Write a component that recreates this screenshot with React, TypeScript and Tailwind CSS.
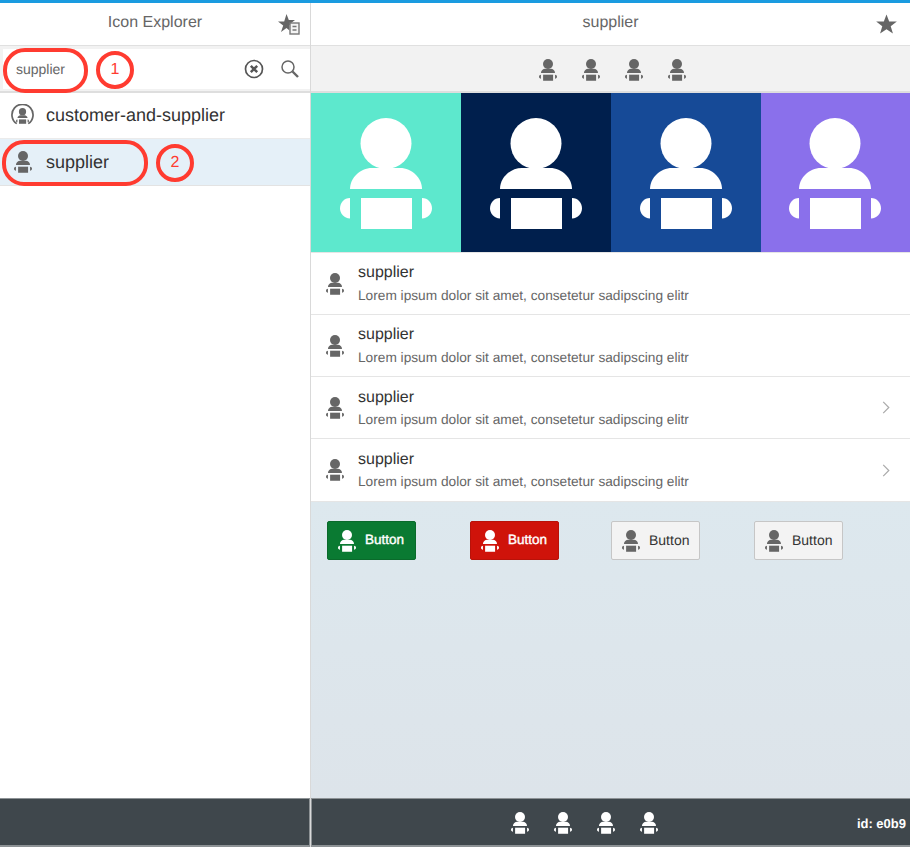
import React from "react";

function Supplier({ className, fill = "#666" }: { className: string; fill?: string }) {
  return (
    <svg viewBox="0 0 92 112" className={className} fill={fill}>
      <circle cx="46" cy="25.5" r="25.5" />
      <path d="M10 71C10 60 20 50 32 50H60C72 50 82 60 82 71Z" />
      <rect x="21" y="80" width="51" height="31" />
      <path d="M10 80V100.500C4 100.500 0 95 0 90.500C0 85 4 80 10 80Z" />
      <path d="M82 80V100.500C88 100.500 92 95 92 90.500C92 85 88 80 82 80Z" />
    </svg>
  );
}

function StarIcon({ className }: { className: string }) {
  return (
    <svg viewBox="0 0 24 24" className={className} fill="#666">
      <path d="M12 1.500L14.800 8.900H22.800L16.400 13.700L18.700 21.500L12 16.900L5.300 21.500L7.600 13.700L1.200 8.900H9.200Z" />
    </svg>
  );
}

function ListRow({ chevron, last }: { chevron?: boolean; last?: boolean }) {
  return (
    <div className={`flex items-center border-b border-[#e5e5e5] bg-white pl-[15px] pr-[20px] ${last ? "h-[63px]" : "h-[62px]"}`}>
      <Supplier className="h-[22px] w-[18px] shrink-0" />
      <div className="ml-[14px] flex-1">
        <div className={`text-[16px] leading-[20px] text-[#333] ${chevron ? "mt-[1px]" : ""}`}>supplier</div>
        <div className={`text-[13.700px] leading-[18px] text-[#666] ${chevron ? "mt-[3px]" : "mt-[4px]"}`}>
          Lorem ipsum dolor sit amet, consetetur sadipscing elitr
        </div>
      </div>
      {chevron && (
        <svg viewBox="0 0 8 14" className="h-[13px] w-[8px]" fill="none" stroke="#aaa" strokeWidth="1.300">
          <path d="M1 1L7 7L1 13" />
        </svg>
      )}
    </div>
  );
}

function Btn({ kind }: { kind: "green" | "red" | "plain" }) {
  const cls =
    kind === "green"
      ? "border-[#0a6a2b] bg-[#0a7a32] text-white text-[13.500px] [-webkit-text-stroke:0.4px_white]"
      : kind === "red"
        ? "border-[#b81209] bg-[#cf130a] text-white text-[13.500px] [-webkit-text-stroke:0.4px_white]"
        : "border-[#c6c6c6] bg-[#f3f3f3] text-[#333] text-[14px]";
  return (
    <div className={`flex h-[39px] w-[89px] items-center rounded-[2px] border pl-[10px] ${cls}`}>
      <Supplier className="h-[22px] w-[18px] shrink-0" fill={kind === "plain" ? "#666" : "#fff"} />
      <span className="ml-[9px]">Button</span>
    </div>
  );
}

export default function App() {
  const tiles = ["bg-[#5de8cd]", "bg-[#001f4d]", "bg-[#164a97] pr-[1px]", "bg-[#8a70eb] pr-[1px]"];
  return (
    <div className="relative flex h-[847px] w-[910px] flex-col overflow-hidden bg-white font-['Liberation_Sans',sans-serif] [text-rendering:geometricPrecision]">
      <div className="h-[3px] bg-[#1a9be0]" />
      <div className="flex flex-1">
        <div className="flex w-[311px] flex-col border-r border-[#d9d9d9]">
          <div className="relative flex h-[43px] items-center justify-center border-b border-[#e0e0e0] pb-[2px] text-[16px] text-[#666]">
            Icon Explorer
            <svg viewBox="0 0 24 24" className="absolute left-[277px] top-[9px] h-[24px] w-[24px]" fill="#666">
              <path d="M9.500 2L11.800 8H18L13.500 11.500V13H12.500V18.500L9.500 16L4 20L6.200 13.500L1 9.500H7.200Z" />
              <rect x="13" y="11" width="9" height="11" fill="#f4f4f4" stroke="#777" strokeWidth="1.400" />
              <path d="M15.500 14.500H19.500M15.500 18H19.500" stroke="#777" strokeWidth="1.400" />
            </svg>
          </div>
          <div className="flex h-[47px] flex-col justify-start border-b-2 border-[#dedede] bg-[#f2f2f2] pl-[3px] pt-[3px]">
            <div className="flex h-[40px] items-center bg-white pl-[13px] pr-[10px]">
              <span className="flex-1 text-[14px] text-[#666]">supplier</span>
              <svg viewBox="0 0 20 20" className="mr-[16px] h-[20px] w-[20px]" fill="none" stroke="#555" strokeWidth="1.700">
                <circle cx="10" cy="10" r="8.500" />
                <path d="M6.800 6.800L13.200 13.200M13.200 6.800L6.800 13.200" strokeWidth="2.400" />
              </svg>
              <svg viewBox="0 0 20 20" className="h-[20px] w-[20px]" fill="none" stroke="#666" strokeWidth="1.500">
                <circle cx="8" cy="8" r="6" />
                <path d="M12.500 12.500L18 18" strokeWidth="2.400" />
              </svg>
            </div>
          </div>
          <div className="flex h-[46px] items-center border-b border-[#ebebeb] pl-[11px] text-[18px] text-[#333]">
            <div className="relative flex h-[23px] w-[23px] items-center justify-center">
              <svg viewBox="0 0 24 24" className="absolute inset-0" fill="none" stroke="#666" strokeWidth="1.800">
                <path d="M6 20.500A11 11 0 1 1 18 20.500" />
              </svg>
              <Supplier className="h-[16px] w-[13px]" />
            </div>
            <span className="ml-[12px]">customer-and-supplier</span>
          </div>
          <div className="flex h-[47px] items-center border-b border-[#e3e3e3] bg-[#e5f0f8] pl-[14px] text-[18px] text-[#333]">
            <Supplier className="h-[22px] w-[18px]" />
            <span className="ml-[14px]">supplier</span>
          </div>
          <div className="flex-1" />
          <div className="h-[49px] border-t border-r border-b-2 border-[#8d9295] bg-[#3f474c]" />
        </div>

        <div className="flex flex-1 flex-col">
          <div className="flex h-[43px] items-center justify-center border-b border-[#e0e0e0] text-[16px] text-[#666]">
            <span className="flex-1 pb-[2px] pl-[35px] text-center">supplier</span>
            <StarIcon className="mr-[12px] h-[23px] w-[23px]" />
          </div>
          <div className="flex h-[47px] items-center justify-center gap-[25px] border-b-2 border-[#dedede] bg-[#f2f2f2] pl-[4px] pt-[2px]">
            {[0, 1, 2, 3].map((i) => (
              <Supplier key={i} className="h-[22px] w-[18px]" />
            ))}
          </div>
          <div className="grid h-[159px] grid-cols-[150px_150px_150px_149px]">
            {tiles.map((t) => (
              <div key={t} className={`flex items-center justify-center pt-[2px] ${t}`}>
                <Supplier className="h-[112px] w-[92px]" fill="#fff" />
              </div>
            ))}
          </div>
          <div className="border-t border-[#e5e5e5]">
            <ListRow />
            <ListRow />
            <ListRow chevron />
            <ListRow chevron last />
          </div>
          <div className="grid flex-1 grid-cols-[143px_141px_143px_89px] items-start bg-gradient-to-b from-[#dde8ee] to-[#dde4ea] pl-[16px] pt-[19px]">
            <Btn kind="green" />
            <Btn kind="red" />
            <Btn kind="plain" />
            <Btn kind="plain" />
          </div>
          <div className="relative flex h-[49px] items-center gap-[25px] border-t border-l border-b-2 border-[#8d9295] bg-[#3f474c] pl-[199px] pt-[2px]">
            {[0, 1, 2, 3].map((i) => (
              <Supplier key={i} className="h-[22px] w-[18px]" fill="#fff" />
            ))}
            <span className="absolute right-[4px] top-[15px] text-[13px] font-bold text-white">id: e0b9</span>
          </div>
        </div>
      </div>

      <div className="absolute left-[3px] top-[48px] h-[45px] w-[85px] rounded-[22px] border-[4px] border-[#ff3b30]" />
      <div className="absolute left-[96px] top-[51px] flex h-[38px] w-[38px] items-center justify-center rounded-full border-[4px] border-[#ff3b30] text-[16px] text-[#ff3b30]">1</div>
      <div className="absolute left-[2px] top-[140px] h-[46px] w-[146px] rounded-[22px] border-[4px] border-[#ff3b30]" />
      <div className="absolute left-[156px] top-[144px] flex h-[38px] w-[38px] items-center justify-center rounded-full border-[4px] border-[#ff3b30] text-[16px] text-[#ff3b30]">2</div>
    </div>
  );
}
